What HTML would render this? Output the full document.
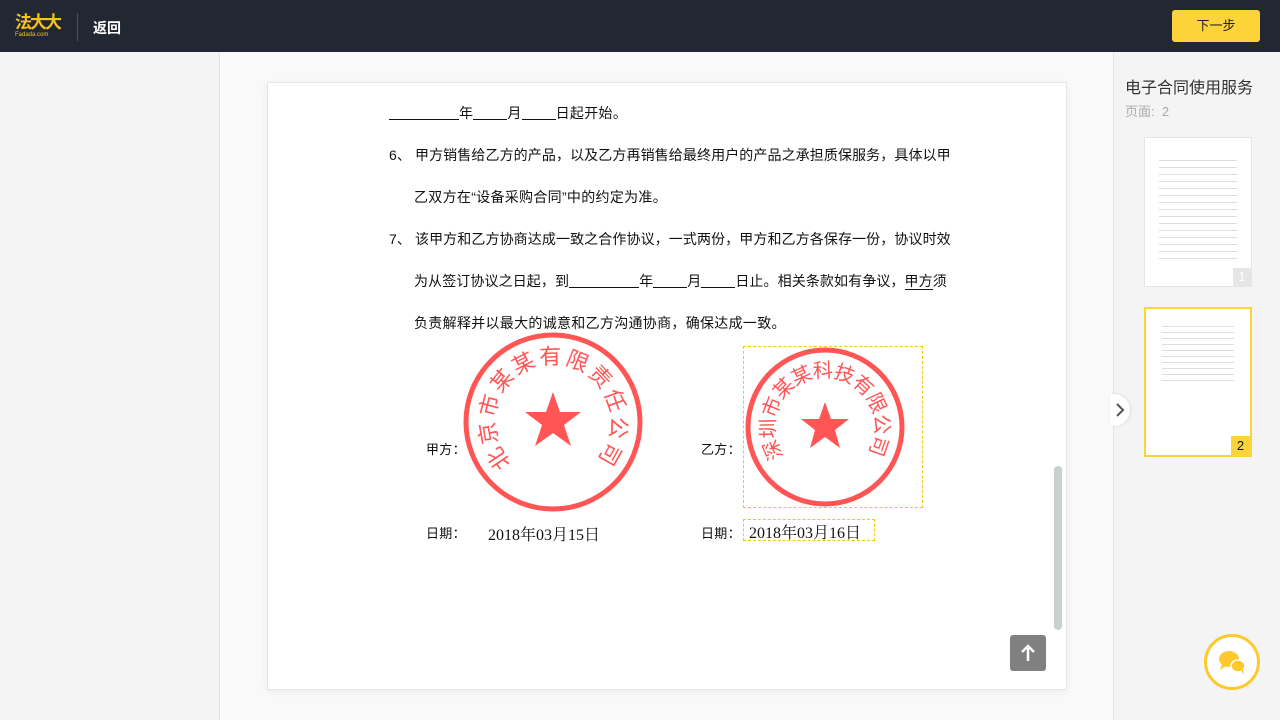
<!DOCTYPE html>
<html><head><meta charset="utf-8"><style>
*{margin:0;padding:0;box-sizing:border-box}
body{width:1280px;height:720px;overflow:hidden;background:#f4f4f4;font-family:"Liberation Sans","Noto Sans CJK SC",sans-serif;position:relative}
.top{position:absolute;left:0;top:0;width:1280px;height:52px;background:#222831}
.logo{position:absolute;left:15px;top:14px;color:#f5c518;font-weight:bold;font-size:17px;letter-spacing:-2px;line-height:18px}
.logo small{display:block;font-size:6px;letter-spacing:0;line-height:6px;font-weight:normal}
.sep{position:absolute;left:77px;top:13px;width:1px;height:28px;background:#4a5058}
.back{position:absolute;left:93px;top:18px;color:#fff;font-size:14px;font-weight:bold}
.next{position:absolute;left:1172px;top:10px;width:88px;height:32px;background:#fdd33a;border-radius:3px;font-size:13px;text-align:center;line-height:32px;color:#222}
.lp{position:absolute;left:0;top:52px;width:220px;height:668px;background:#f4f4f4;border-right:1px solid #e4e4e4}
.mid{position:absolute;left:220px;top:52px;width:894px;height:668px;background:#f9f9f9;border-right:1px solid #e4e4e4}
.page{position:absolute;left:267px;top:82px;width:800px;height:608px;background:#fff;border:1px solid #e6e6e6;box-shadow:0 2px 8px rgba(0,0,0,.06)}
.t{position:absolute;font-size:14px;color:#111;white-space:nowrap;letter-spacing:.3px}
.u{display:inline-block;border-bottom:1px solid #111;height:14px;vertical-align:-2px}
.scroll{position:absolute;left:1054px;top:466px;width:8px;height:164px;background:#c8d0d2;border-radius:4px}
.up{position:absolute;left:1010px;top:635px;width:36px;height:36px;background:#808080;border-radius:3px}
.rt{position:absolute;left:1125px;top:74px;font-size:16px;color:#333}
.rp{position:absolute;left:1125px;top:101px;font-size:13px;color:#aaa}
.th{position:absolute;left:1144px;background:#fff;width:108px;height:150px}
.cb{position:absolute;left:1204px;top:634px;width:56px;height:56px;border:3px solid #fdc92c;border-radius:50%;background:#fff}
.arr{position:absolute;left:1110px;top:394px;width:20px;height:32px;background:#fff;border-radius:0 16px 16px 0;box-shadow:1px 0 3px rgba(0,0,0,.1)}
</style></head><body>
<div class="top">
<div class="logo">法大大<small>Fadada.com</small></div>
<div class="sep"></div><div class="back">返回</div>
<div class="next">下一步</div>
</div>
<div class="lp"></div><div class="mid"></div>
<div class="page"></div>
<div class="t" style="left:389px;top:103px"><span class="u" style="width:70px"></span>年<span class="u" style="width:34px"></span>月<span class="u" style="width:34px"></span>日起开始。</div>
<div class="t" style="left:389px;top:145px;letter-spacing:.1px">6、 甲方销售给乙方的产品，以及乙方再销售给最终用户的产品之承担质保服务，具体以甲</div>
<div class="t" style="left:414px;top:187px">乙双方在“设备采购合同”中的约定为准。</div>
<div class="t" style="left:389px;top:229px;letter-spacing:.1px">7、 该甲方和乙方协商达成一致之合作协议，一式两份，甲方和乙方各保存一份，协议时效</div>
<div class="t" style="left:414px;top:271px;letter-spacing:.1px">为从签订协议之日起，到<span class="u" style="width:70px"></span>年<span class="u" style="width:34px"></span>月<span class="u" style="width:34px"></span>日止。相关条款如有争议，<span style="border-bottom:1px solid #111">甲方</span>须</div>
<div class="t" style="left:414px;top:313px">负责解释并以最大的诚意和乙方沟通协商，确保达成一致。</div>
<div class="t" style="left:426px;top:439px;font-size:13px">甲方：</div>
<div class="t" style="left:701px;top:439px;font-size:13px">乙方：</div>
<div class="t" style="left:426px;top:523px;font-size:13px">日期：</div>
<div class="t" style="left:701px;top:523px;font-size:13px">日期：</div>
<div class="t" style="left:488px;top:522px;font-size:16px;font-family:'Liberation Serif','Noto Serif CJK SC',serif;letter-spacing:0">2018年03月15日</div>
<div style="position:absolute;left:743px;top:519px;width:132px;height:22px;border:1px dashed #f5c518"></div>
<div class="t" style="left:749px;top:520px;font-size:16px;font-family:'Liberation Serif','Noto Serif CJK SC',serif;letter-spacing:0">2018年03月16日</div>
<div style="position:absolute;left:743px;top:346px;width:180px;height:162px;border:1px dashed #f5c518"></div>
<svg style="position:absolute;left:0;top:0" width="1280" height="720">
<defs>
<path id="a1" d="M512,463 A58,58 0 1,1 594,463"/>
<path id="a2" d="M784,456 A50,50 0 1,1 866,456"/>
</defs>
<circle cx="553" cy="422" r="87" fill="none" stroke="#f55" stroke-width="5"/>
<polygon fill="#f55" points="553,392 560,412 581,412 564,425 571,446 553,433 535,446 542,425 525,412 546,412"/>
<text font-size="22" fill="#f55" font-family="'Noto Sans CJK SC',sans-serif"><textPath href="#a1" textLength="268" lengthAdjust="spacing">北京市某某有限责任公司</textPath></text>
<circle cx="825" cy="427" r="77" fill="none" stroke="#f55" stroke-width="5"/>
<polygon fill="#f55" points="825,402 831,419 849,419 835,430 840,448 825,437 810,448 815,430 801,419 819,419"/>
<text font-size="20" fill="#f55" font-family="'Noto Sans CJK SC',sans-serif"><textPath href="#a2" textLength="214" lengthAdjust="spacing">深圳市某某科技有限公司</textPath></text>
</svg>
<div class="scroll"></div>
<div class="up"><svg width="36" height="36"><path d="M18 26V11M12 17l6-6 6 6" stroke="#fff" stroke-width="2.5" fill="none"/></svg></div>
<div class="rt">电子合同使用服务</div>
<div class="rp">页面:&nbsp;&nbsp;2</div>
<div class="th" style="top:137px;border:1px solid #e4e4e4">
<div style="margin:16px 14px 0;height:110px;background:repeating-linear-gradient(#fff 0,#fff 6px,#ddd 6px,#ddd 7px)"></div>
<div style="position:absolute;right:0;bottom:0;width:18px;height:18px;background:#e6e6e6;color:#fff;font-size:13px;text-align:center;line-height:18px">1</div>
</div>
<div class="th" style="top:307px;border:2px solid #fdd33a">
<div style="margin:12px 16px 0;height:60px;background:repeating-linear-gradient(#fff 0,#fff 5px,#ddd 5px,#ddd 6px)"></div>
<div style="position:absolute;right:0;bottom:0;width:19px;height:19px;background:#fdd33a;color:#111;font-size:13px;text-align:center;line-height:19px">2</div>
</div>
<div class="arr"><svg width="20" height="32"><path d="M7 10l6 6-6 6" stroke="#555" stroke-width="2" fill="none"/></svg></div>
<div class="cb"><svg width="50" height="50"><ellipse cx="22" cy="22" rx="10" ry="8" fill="#fdc92c"/><path d="M15 27l-2 6 6-4z" fill="#fdc92c"/><ellipse cx="31" cy="29" rx="7" ry="6" fill="#fdc92c" stroke="#fff" stroke-width="1.5"/><path d="M34 33l3 5-1-6z" fill="#fdc92c"/></svg></div>
</body></html>
